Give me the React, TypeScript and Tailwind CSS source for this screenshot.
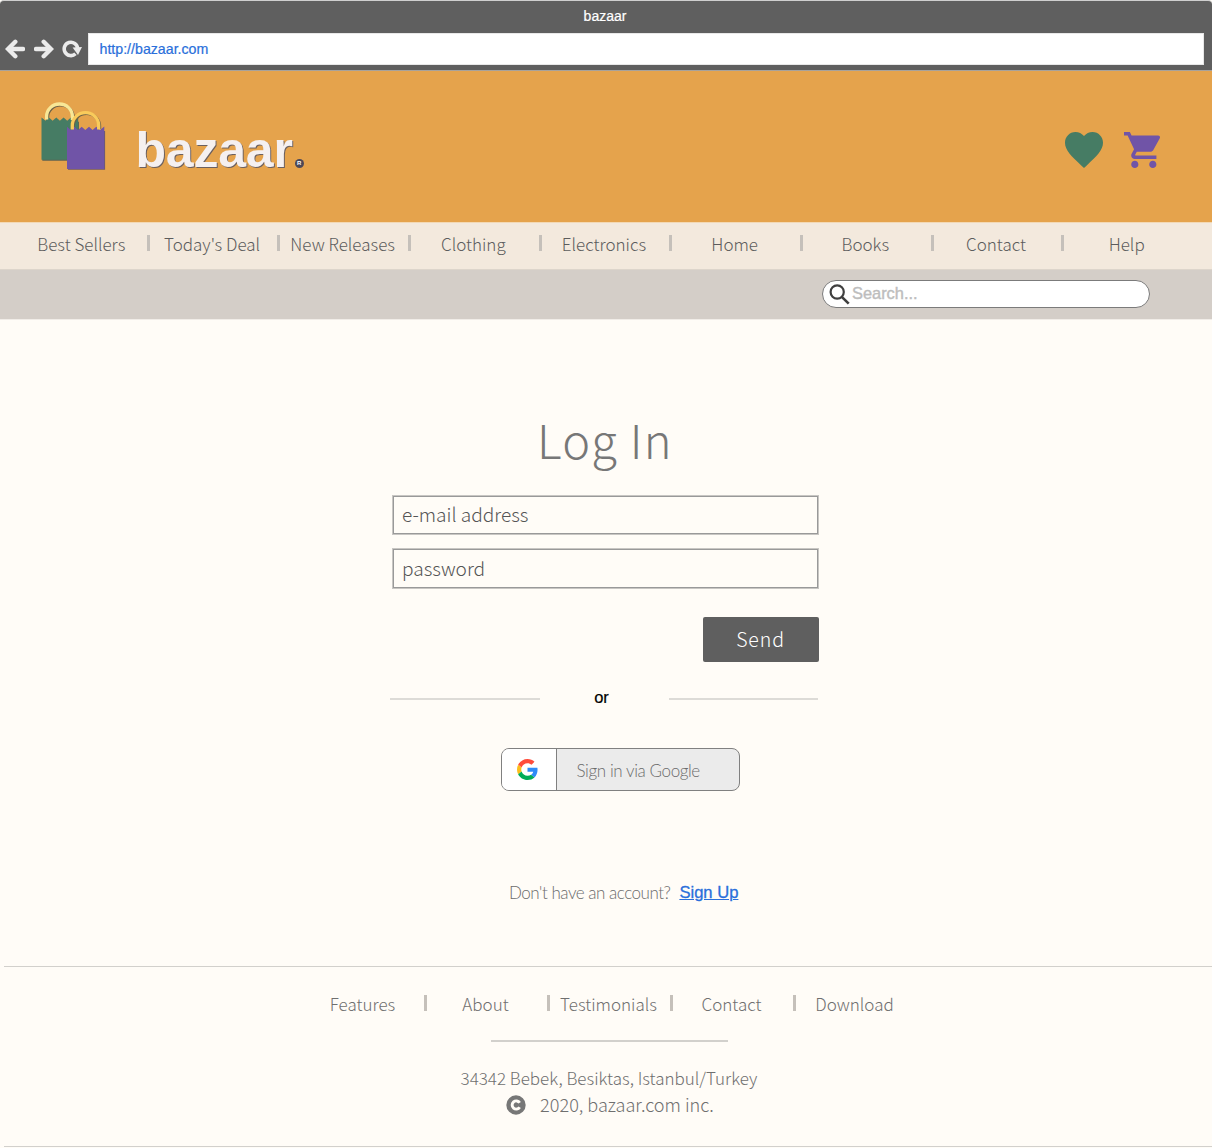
const NAV_ITEMS = [
  "Best Sellers",
  "Today's Deal",
  "New Releases",
  "Clothing",
  "Electronics",
  "Home",
  "Books",
  "Contact",
  "Help",
];

const FOOTER_ITEMS = ["Features", "About", "Testimonials", "Contact", "Download"];

function ArrowIcon({ className = "" }: { className?: string }) {
  return (
    <svg viewBox="0 0 20 20" className={`h-5 w-5 ${className}`} fill="none" stroke="#ebebeb" strokeWidth="4.400" strokeLinecap="round" strokeLinejoin="miter">
      <path d="M10.300 2.800 3.100 10l7.200 7.200" />
      <path d="M4 10h14" />
    </svg>
  );
}

function ReloadIcon() {
  return (
    <svg viewBox="0 0 20 20" className="h-5 w-5" fill="none">
      <path d="M13.500 14.800A6.700 6.700 0 1 1 15.600 9.500" stroke="#ebebeb" strokeWidth="3.600" />
      <path d="M10.600 8.500 20 7.900 16 16.100z" fill="#ebebeb" />
    </svg>
  );
}

function BagsLogo() {
  return (
    <svg viewBox="0 0 66 70" className="h-[70px] w-[66px]" fill="none">
      <path d="M7.600 18.500V16.600a12.900 12.500 0 0 1 25.800 0V19" stroke="#6b6048" strokeWidth="3" />
      <path d="M2.300 17.600 6.100 20.700H39V59.800H2.300z" fill="#5f6350" />
      <path d="M1.500 16.500 5.300 19.800 9 16.500l3.600 3.300 3.700-3.300 3.600 3.300 3.700-3.300 3.600 3.300 3.700-3.300 3.600 3.300 3.700-3.300V58.700H1.500z" fill="#467c64" />
      <path d="M6.600 18.500v-3a12.900 12.500 0 0 1 25.800 0V19" stroke="#f8e796" strokeWidth="3.300" />
      <path d="M33.300 28v-2.600a13.200 12.800 0 0 1 26.400 0V28" stroke="#6b6048" strokeWidth="3" />
      <path d="M28 30H65.100V68.800H28z" fill="#6d5968" />
      <path d="M27 25.700 30.700 29l3.700-3.300L38 29l3.700-3.300 3.600 3.300 3.700-3.300 3.600 3.300 3.700-3.300L60 29l4.300-3.500V68H27z" fill="#7054a7" />
      <path d="M32.300 28.400v-4a13.200 12.800 0 0 1 26.400 0v4" stroke="#f9cb5b" strokeWidth="3.300" />
    </svg>
  );
}

function HeartIcon() {
  return (
    <svg viewBox="2 3 20 18.350" preserveAspectRatio="none" className="h-9 w-[38px]" fill="#467c64">
      <path d="M12 21.350l-1.450-1.320C5.400 15.360 2 12.280 2 8.500 2 5.420 4.420 3 7.500 3c1.740 0 3.410.810 4.500 2.090C13.090 3.810 14.760 3 16.500 3 19.580 3 22 5.420 22 8.500c0 3.780-3.400 6.860-8.550 11.540L12 21.350z" />
    </svg>
  );
}

function CartIcon() {
  return (
    <svg viewBox="1 2 20 20" preserveAspectRatio="none" className="h-9 w-9" fill="#7054a7">
      <path d="M7 18c-1.100 0-1.990.900-1.990 2S5.900 22 7 22s2-.900 2-2-.900-2-2-2zM1 2v2h2l3.600 7.590-1.350 2.450c-.160.280-.250.610-.250.960 0 1.100.900 2 2 2h12v-2H7.420c-.140 0-.250-.110-.250-.250l.030-.120.900-1.630h7.450c.750 0 1.410-.410 1.750-1.030l3.580-6.490c.080-.140.120-.310.120-.480 0-.550-.450-1-1-1H5.210l-.940-2H1zm16 16c-1.100 0-1.990.900-1.990 2s.890 2 1.990 2 2-.900 2-2-.900-2-2-2z" />
    </svg>
  );
}

function SearchIcon() {
  return (
    <svg viewBox="0 0 21 21" className="h-[21px] w-[21px] shrink-0" fill="none" stroke="#3f3f3f">
      <circle cx="8.200" cy="8" r="6.600" strokeWidth="2.200" />
      <path d="m12.800 12.800 6.900 6.900" strokeWidth="2.600" />
    </svg>
  );
}

function GoogleIcon() {
  return (
    <svg viewBox="0 0 48 48" className="h-[21px] w-[21px]">
      <path fill="#ff4c3b" d="M24 9.500c3.540 0 6.710 1.220 9.210 3.600l6.850-6.850C35.900 2.380 30.470 0 24 0 14.620 0 6.510 5.380 2.560 13.220l7.980 6.190C12.430 13.720 17.740 9.500 24 9.500z" />
      <path fill="#2f8bf7" d="M46.980 24.550c0-1.570-.150-3.090-.380-4.550H24v9.020h12.940c-.580 2.960-2.260 5.480-4.780 7.180l7.730 6c4.510-4.180 7.090-10.360 7.090-17.650z" />
      <path fill="#fcbd1c" d="M10.530 28.590c-.480-1.450-.760-2.990-.760-4.590s.270-3.140.760-4.590l-7.980-6.190C.920 16.460 0 20.120 0 24c0 3.880.920 7.540 2.560 10.780l7.970-6.190z" />
      <path fill="#00ac57" d="M24 48c6.480 0 11.930-2.130 15.890-5.810l-7.730-6c-2.150 1.450-4.920 2.300-8.160 2.300-6.260 0-11.570-4.220-13.470-9.910l-7.980 6.190C6.510 42.620 14.620 48 24 48z" />
    </svg>
  );
}

function CopyrightIcon() {
  return (
    <svg viewBox="0 0 20 20" className="mt-[2px] h-5 w-5" fill="none">
      <circle cx="10" cy="10" r="9.700" fill="#777" />
      <path d="M13.700 7.800A4.100 4.100 0 1 0 13.700 12.200" stroke="#fffcf7" strokeWidth="2.900" />
    </svg>
  );
}

function BrowserBar() {
  return (
    <div className="flex h-[71px] flex-col rounded-t border-t border-b border-t-[#cfcfcf] border-b-[#a8a29a] bg-[#5f5f5f]">
      <div className="flex h-8 items-center justify-center pr-[2px] pb-[2px] text-[14px] text-white">
        <span className="[-webkit-text-stroke:0.2px_white]">bazaar</span>
      </div>
      <div className="flex h-8 items-center pr-2">
        <div className="flex w-[88px] items-center gap-2 pb-px pl-[5px]">
          <ArrowIcon />
          <ArrowIcon className="ml-px rotate-180" />
          <ReloadIcon />
        </div>
        <div className="flex h-8 flex-1 items-center border border-[#e8e8e8] bg-white pt-[2px] pl-[10.500px] text-[14.200px] text-[#2a6fdb]">
          <span className="[-webkit-text-stroke:0.2px_#2a6fdb]">http://bazaar.com</span>
        </div>
      </div>
    </div>
  );
}

function Header() {
  return (
    <header className="flex h-[151px] items-start justify-between bg-[#e5a34c] pr-[52px] pl-10">
      <div className="flex items-start pt-[30px]">
        <BagsLogo />
        <div className="flex items-end pt-[21px] pl-[29.500px]">
          <span className="text-[50px] leading-[56px] font-bold tracking-[-0.200px] text-[#f5f0f0] [text-shadow:1px_1px_0.500px_#6b6060]">
            bazaar
          </span>
          <span className="mb-[10.500px] ml-[2px] flex h-[9px] w-[9px] items-center justify-center rounded-full bg-[#4c4858] text-[6px] leading-none font-bold text-white">
            R
          </span>
        </div>
      </div>
      <div className="flex items-center gap-[21px] pt-[60.500px]">
        <HeartIcon />
        <CartIcon />
      </div>
    </header>
  );
}

function LinkRow({ items, className }: { items: string[]; className: string }) {
  return (
    <ul className={`grid font-['Noto_Sans_CJK_SC',sans-serif] text-[17px] leading-6 font-light ${className}`}>
      {items.map((label, i) => (
        <li key={label} className="flex items-center">
          <span className="-mr-[3px] flex-1 text-center whitespace-nowrap">{label}</span>
          {i < items.length - 1 ? (
            <span className="-mr-[3px] mb-[2px] ml-[3px] h-4 w-[3px] bg-[#c5c0ba]" />
          ) : (
            <span className="w-[3px]" />
          )}
        </li>
      ))}
    </ul>
  );
}

function LoginForm() {
  return (
    <div className="flex w-[427px] flex-col font-['Noto_Sans_CJK_SC',sans-serif] font-light text-[#555]">
      <h1 className="pl-[145px] text-[47px] leading-[64px] font-light tracking-[1.200px] text-[#777]">Log In</h1>
      <div className="mt-6 flex h-10 items-center border border-[#c8c6c3] pb-[2px] pl-[9px] text-[19.100px] inset-shadow-[0_0_0_1px_#999]">
        e-mail address
      </div>
      <div className="mt-[13px] flex h-[41px] items-center border border-[#c8c6c3] pl-[9px] text-[19.100px] inset-shadow-[0_0_0_1px_#999]">
        password
      </div>
      <button className="mt-7 h-[45px] w-[116px] self-end rounded-xs bg-[#5f5f5f] pr-px pb-[2px] text-[19.500px] leading-7 tracking-[0.900px] text-white">
        Send
      </button>
    </div>
  );
}

export default function App() {
  return (
    <div className="flex h-[1148px] w-[1212px] flex-col overflow-hidden bg-[#fffcf7] font-['Liberation_Sans',Arial,sans-serif]">
      <BrowserBar />
      <Header />
      <nav className="flex h-[47px] items-center border-t border-[#f3d9b5] bg-[#f3e9dd] pb-[5px] pl-[16px] text-[#5c5c5c]">
        <LinkRow items={NAV_ITEMS} className="w-[1176px] grid-cols-9" />
      </nav>
      <div className="flex h-[51px] items-start justify-end border-t border-b border-t-[#ddd5cb] border-b-[#f1ede8] bg-[#d4cec8] pt-[10px] pr-[62px]">
        <div className="flex h-7 w-[328px] items-center rounded-[14px] border border-[#7b7b7b] bg-white pl-[6px] text-[16.400px] text-[#bdbdbd]">
          <SearchIcon />
          <span className="pb-[2px] pl-[2px] [-webkit-text-stroke:0.400px_#bdbdbd]">Search...</span>
        </div>
      </div>

      <main className="flex h-[646px] flex-col pt-[87px] pl-[392px]">
        <LoginForm />
        <div className="mt-[27px] -ml-[2px] flex h-5 w-[428px] items-center justify-between text-[16.500px] text-black">
          <span className="h-[1.500px] w-[150px] bg-[#dddbd7]" />
          <span className="mr-[6px] pb-[3px] [-webkit-text-stroke:0.200px_black]">or</span>
          <span className="h-[1.500px] w-[149px] bg-[#dddbd7]" />
        </div>
        <button className="mt-[39px] ml-[109px] flex h-[43px] w-[239px] items-stretch overflow-hidden rounded-[8px] border border-[#808080] bg-[#ebebeb]">
          <span className="flex w-[55px] items-center justify-center border-r border-[#808080] bg-white pr-[3px]">
            <GoogleIcon />
          </span>
          <span className="self-center pt-[3px] pl-[19.500px] font-[Lato] text-[17px] font-light tracking-[-0.400px] text-[#6b6b6b]">
            Sign in via Google
          </span>
        </button>
        <p className="mt-[90px] ml-[117px] flex items-baseline gap-[9px] font-[Lato] text-[17px] leading-6 font-light tracking-[-0.480px] text-[#6b6b6b]">
          Don't have an account?
          <a className="relative -top-px font-['Liberation_Sans',sans-serif] text-[16.600px] font-normal tracking-normal text-[#2a6fdb] underline [-webkit-text-stroke:0.300px_#2a6fdb]">
            Sign Up
          </a>
        </p>
      </main>

      <footer className="ml-1 flex h-[181px] flex-col border-t border-b border-[#d2d0cc] pt-[25px] pl-[297px] text-[#6f6f6f]">
        <LinkRow items={FOOTER_ITEMS} className="w-[615px] grid-cols-5" />
        <div className="mt-[24px] ml-[190px] h-[1.500px] w-[237px] bg-[#d2d0cc]" />
        <div className="mt-[22px] w-[616px] text-center font-['Noto_Sans_CJK_SC',sans-serif] text-[17px] leading-[27px] font-light">
          <p>34342 Bebek, Besiktas, Istanbul/Turkey</p>
          <p className="flex items-center justify-center gap-[14px] pl-[2px] text-[18.100px]">
            <CopyrightIcon />
            2020, bazaar.com inc.
          </p>
        </div>
      </footer>
    </div>
  );
}
